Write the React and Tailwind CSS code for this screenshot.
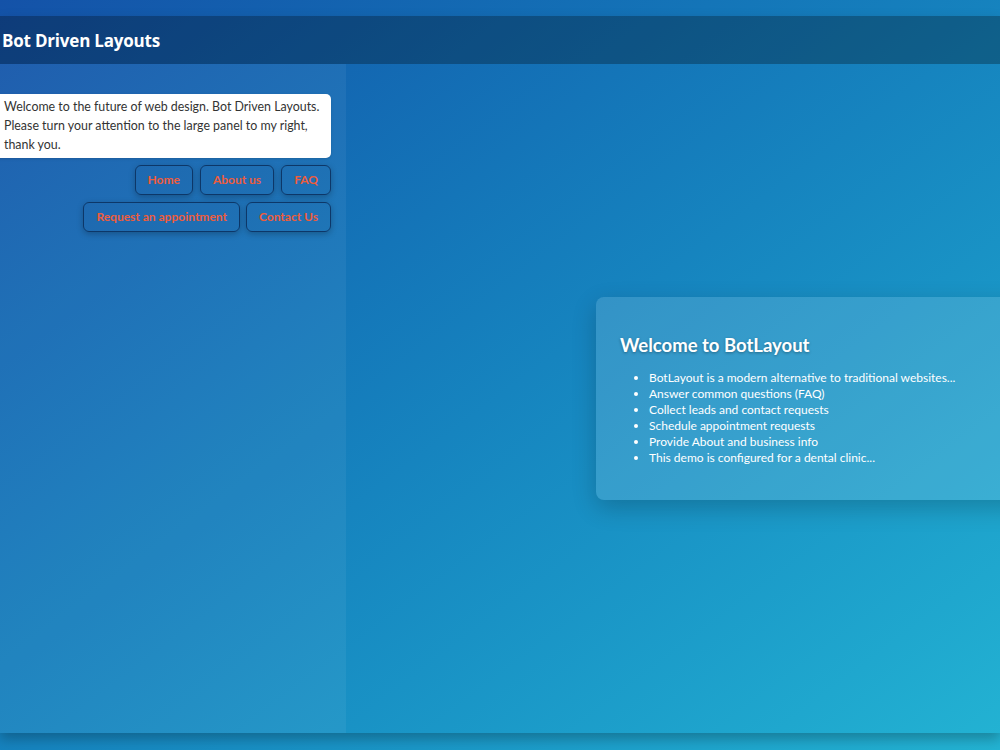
export default function App() {
  const items = [
    "BotLayout is a modern alternative to traditional websites...",
    "Answer common questions (FAQ)",
    "Collect leads and contact requests",
    "Schedule appointment requests",
    "Provide About and business info",
    "This demo is configured for a dental clinic...",
  ];
  const btn =
    "h-[30px] px-3 rounded-md border border-[#0d3768] text-[#ee5c3c] text-[12px] font-bold shadow-[0_2px_6px_rgba(0,0,0,0.25)] bg-black/[0.02]";
  return (
    <div className="h-[750px] w-[1000px] overflow-hidden bg-linear-to-br from-[#1452a8] to-[#23b3d3] pt-4 font-['Open_Sans',sans-serif]">
      <div className="flex h-[717px] flex-col shadow-[0_6px_12px_rgba(0,0,0,0.25)]">
        <header className="flex h-12 shrink-0 items-center bg-black/[0.28] pl-[2px]">
          <h1 className="mt-[2px] text-[17px] font-bold text-white font-['Open_Sans',sans-serif] tracking-[-0.2px]">
            Bot Driven Layouts
          </h1>
        </header>
        <div className="flex min-h-0 flex-1">
          <aside className="w-[346px] shrink-0 bg-white/[0.05] pt-[30px] pr-[15px]">
            <div className="ml-[-10px] rounded-[5px] bg-white pl-[14px] pr-[2px] pt-[3px] pb-[4px] text-[12.4px] leading-[19px] text-[#333] font-['Lato',sans-serif] shadow">
              Welcome to the future of web design. Bot Driven Layouts. Please turn your attention to the large panel to my right, thank you.
            </div>
            <div className="mt-[7px] flex flex-col items-end gap-[7px] font-['Lato',sans-serif]">
              <div className="flex gap-[7px]">
                <button className={btn}>Home</button>
                <button className={btn}>About us</button>
                <button className={btn}>FAQ</button>
              </div>
              <div className="flex gap-[6px]">
                <button className={btn}>Request an appointment</button>
                <button className={btn}>Contact Us</button>
              </div>
            </div>
          </aside>
          <main className="flex min-w-0 flex-1 items-center overflow-hidden">
            <section className="ml-[250px] w-[460px] shrink-0 rounded-lg bg-white/[0.13] px-6 pt-8 pb-[34px] text-white shadow-[0_8px_24px_rgba(0,0,0,0.2)] font-['Lato',sans-serif]">
              <h2 className="mt-[2px] text-[18.5px] font-bold leading-7 [text-shadow:0_1px_3px_rgba(0,0,0,0.35)]">
                Welcome to BotLayout
              </h2>
              <ul className="mt-[11px] list-disc pl-[29px] text-[12px] leading-4">
                {items.map((t) => (
                  <li key={t}>{t}</li>
                ))}
              </ul>
            </section>
          </main>
        </div>
      </div>
    </div>
  );
}
